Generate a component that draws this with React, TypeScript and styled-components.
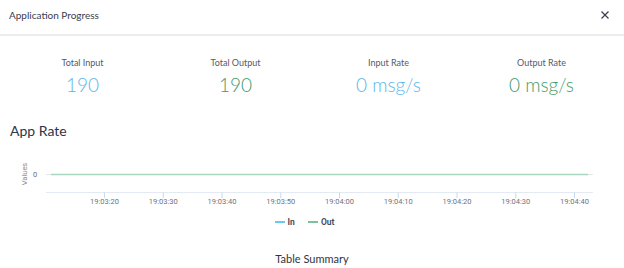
import React from 'react'
import styled, { createGlobalStyle } from 'styled-components'

//Types
type Stat = {
    label: string,
    value: string,
    tone: 'in' | 'out',
}

const stats: Stat[] = [
    { label: 'Total Input', value: '190', tone: 'in' },
    { label: 'Total Output', value: '190', tone: 'out' },
    { label: 'Input Rate', value: '0 msg/s', tone: 'in' },
    { label: 'Output Rate', value: '0 msg/s', tone: 'out' },
]

const ticks = ['19:03:20', '19:03:30', '19:03:40', '19:03:50', '19:04:00', '19:04:10', '19:04:20', '19:04:30', '19:04:40']

const IN_COLOR = '#5db6e6'
const OUT_COLOR = '#3f9b6d'

//Styles
const GlobalStyle = createGlobalStyle`
    html, body {
        margin: 0;
        padding: 0;
        background: #fff;
    }
    body {
        font-family: Lato, "Open Sans", sans-serif;
        color: #2f3345;
    }
`;

const Modal = styled.div`
    width: 624px;
    height: 268px;
    overflow: hidden;
    background: #fff;
`;

const Header = styled.div`
    display: flex;
    align-items: center;
    justify-content: space-between;
    height: 30px;
    padding: 0 14px 4px 9px;
    border-bottom: 2px solid #ececec;
`;

const Title = styled.div`
    font-size: 10px;
    color: #3a3d4d;
`;

const Close = styled.div`
    width: 10px;
    height: 10px;
    display: flex;
`;

const Stats = styled.div`
    display: grid;
    grid-template-columns: repeat(4, 1fr);
    padding: 0 6px;
    margin-top: 21px;
`;

const StatBox = styled.div`
    display: flex;
    flex-direction: column;
    align-items: center;
`;

const StatLabel = styled.div`
    font-size: 9px;
    color: #555a6c;
    line-height: 12px;
`;

const StatValue = styled.div<{ $tone: 'in' | 'out' }>`
    font-size: 19px;
    font-weight: 300;
    line-height: 24px;
    margin-top: 4px;
    color: ${p => p.$tone === 'in' ? IN_COLOR : OUT_COLOR};
`;

const SectionTitle = styled.div`
    font-size: 14px;
    color: #2f3345;
    padding-left: 10px;
    margin-top: 25px;
    line-height: 18px;
`;

const Chart = styled.svg`
    display: block;
    margin-top: 16px;
`;

const Legend = styled.div`
    display: flex;
    justify-content: center;
    gap: 13px;
    padding-right: 15px;
    margin-top: 9px;
`;

const LegendItem = styled.div`
    display: flex;
    align-items: center;
    gap: 3px;
    font-size: 8.5px;
    font-weight: 700;
    color: #4a4d5c;
    font-family: Roboto, sans-serif;
`;

const Swatch = styled.span<{ $color: string }>`
    width: 10px;
    height: 1.5px;
    background: ${p => p.$color};
`;

const TableTitle = styled.div`
    text-align: center;
    font-size: 11px;
    color: #2f3345;
    margin-top: 25px;
`;

const AppRateChart = () => {
    const x0 = 104.5
    const step = 58.75
    return (
        <Chart width="624" height="52" viewBox="0 0 624 52">
            <text x="27" y="18" transform="rotate(-90 27 18)" textAnchor="middle" fontSize="7.5" fill="#8a8d99" fontFamily="Roboto, sans-serif">Values</text>
            <text x="35" y="21" textAnchor="middle" fontSize="7.5" fill="#6b6e7a" fontFamily="Roboto, sans-serif">0</text>
            <line x1="46" y1="18.5" x2="593" y2="18.5" stroke="#e6e8ec" strokeWidth="1" />
            <line x1="51" y1="18.5" x2="588" y2="18.5" stroke="#a8d7bf" strokeWidth="1.6" />
            <line x1="46" y1="36.5" x2="593" y2="36.5" stroke="#e3eaf3" strokeWidth="1.2" />
            {ticks.map((t, i) => {
                const x = x0 + i * step
                return (
                    <g key={t}>
                        <line x1={x} y1="36.5" x2={x} y2="42" stroke="#c6daf0" strokeWidth="1" />
                        <text x={x} y="47.5" textAnchor="middle" fontSize="7.5" fill="#6f7280" fontFamily="Roboto, sans-serif">{t}</text>
                    </g>
                )
            })}
        </Chart>
    )
}

const App = () => {
    return (
        <Modal>
            <GlobalStyle />
            <Header>
                <Title>Application Progress</Title>
                <Close>
                    <svg width="10" height="10" viewBox="0 0 10 10">
                        <path d="M1.5 1.5 L8.5 8.5 M8.5 1.5 L1.5 8.5" stroke="#3a3d4d" strokeWidth="1.2" />
                    </svg>
                </Close>
            </Header>
            <Stats>
                {stats.map(s => (
                    <StatBox key={s.label}>
                        <StatLabel>{s.label}</StatLabel>
                        <StatValue $tone={s.tone}>{s.value}</StatValue>
                    </StatBox>
                ))}
            </Stats>
            <SectionTitle>App Rate</SectionTitle>
            <AppRateChart />
            <Legend>
                <LegendItem><Swatch $color="#6cc9ee" />In</LegendItem>
                <LegendItem><Swatch $color="#7cc09c" />Out</LegendItem>
            </Legend>
            <TableTitle>Table Summary</TableTitle>
        </Modal>
    )
}

export default App;
